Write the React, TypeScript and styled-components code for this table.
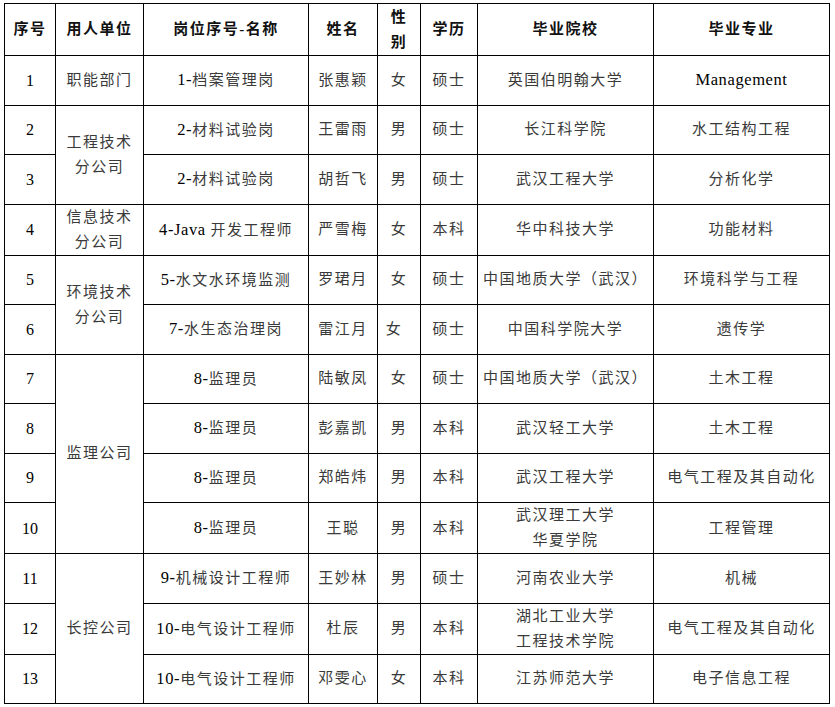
import React from 'react';
import styled, { createGlobalStyle } from 'styled-components';

type Person = {
  no: number;
  unit?: { name: string[]; span: number };
  post: string;
  name: string;
  gender: string;
  degree: string;
  school: string[];
  major: string;
  genderShift?: number;
};

const people: Person[] = [
  { no: 1, unit: { name: ['职能部门'], span: 1 }, post: '1-档案管理岗', name: '张惠颖', gender: '女', degree: '硕士', school: ['英国伯明翰大学'], major: 'Management' },
  { no: 2, unit: { name: ['工程技术', '分公司'], span: 2 }, post: '2-材料试验岗', name: '王雷雨', gender: '男', degree: '硕士', school: ['长江科学院'], major: '水工结构工程' },
  { no: 3, post: '2-材料试验岗', name: '胡哲飞', gender: '男', degree: '硕士', school: ['武汉工程大学'], major: '分析化学' },
  { no: 4, unit: { name: ['信息技术', '分公司'], span: 1 }, post: '4-Java 开发工程师', name: '严雪梅', gender: '女', degree: '本科', school: ['华中科技大学'], major: '功能材料' },
  { no: 5, unit: { name: ['环境技术', '分公司'], span: 2 }, post: '5-水文水环境监测', name: '罗珺月', gender: '女', degree: '硕士', school: ['中国地质大学（武汉）'], major: '环境科学与工程' },
  { no: 6, post: '7-水生态治理岗', name: '雷江月', gender: '女', degree: '硕士', school: ['中国科学院大学'], major: '遗传学', genderShift: 10 },
  { no: 7, unit: { name: ['监理公司'], span: 4 }, post: '8-监理员', name: '陆敏凤', gender: '女', degree: '硕士', school: ['中国地质大学（武汉）'], major: '土木工程' },
  { no: 8, post: '8-监理员', name: '彭嘉凯', gender: '男', degree: '本科', school: ['武汉轻工大学'], major: '土木工程' },
  { no: 9, post: '8-监理员', name: '郑皓炜', gender: '男', degree: '本科', school: ['武汉工程大学'], major: '电气工程及其自动化' },
  { no: 10, post: '8-监理员', name: '王聪', gender: '男', degree: '本科', school: ['武汉理工大学', '华夏学院'], major: '工程管理' },
  { no: 11, unit: { name: ['长控公司'], span: 3 }, post: '9-机械设计工程师', name: '王妙林', gender: '男', degree: '硕士', school: ['河南农业大学'], major: '机械' },
  { no: 12, post: '10-电气设计工程师', name: '杜辰', gender: '男', degree: '本科', school: ['湖北工业大学', '工程技术学院'], major: '电气工程及其自动化' },
  { no: 13, post: '10-电气设计工程师', name: '邓雯心', gender: '女', degree: '本科', school: ['江苏师范大学'], major: '电子信息工程' },
];

const columns = [51, 88, 165, 69, 43, 57, 176, 176];

const GlobalStyle = createGlobalStyle`
  body {
    margin: 0;
    background: #fff;
  }
`;

const Page = styled.div`
  padding: 3px 0 0 4px;
`;

const Table = styled.table`
  border-collapse: collapse;
  table-layout: fixed;
  width: 825px;
  font-family: 'Liberation Serif', 'Noto Sans CJK SC', serif;
  font-size: 15px;
  letter-spacing: 1.5px;
  color: #3a3a3a;
`;

const HeadCell = styled.th`
  border: 1px solid #000;
  height: 51px;
  padding: 0;
  font-weight: 700;
  color: #111;
  line-height: 25px;
  text-align: center;
  vertical-align: middle;
`;

const Cell = styled.td<{ $shift?: number }>`
  border: 1px solid #000;
  height: 48.5px;
  padding: 0 ${(p) => p.$shift ?? 0}px 0 0;
  line-height: 25px;
  text-align: center;
  vertical-align: middle;
  white-space: nowrap;
`;

const NumCell = styled(Cell)`
  color: #000;
  letter-spacing: 0;
  font-size: 16px;
`;

// Latin runs (digits, "Java", "Management") are set tighter, in Times widths
const Latin = styled.span`
  color: #000;
  font-size: 16.5px;
  letter-spacing: 0.6px;
`;

const Mixed = ({ text }: { text: string }) => (
  <>
    {text.split(/([\x20-\x7e]+)/).map((part, i) =>
      /^[\x20-\x7e]+$/.test(part) ? <Latin key={i}>{part}</Latin> : part ? <React.Fragment key={i}>{part}</React.Fragment> : null,
    )}
  </>
);

const Lines = ({ items }: { items: string[] }) => (
  <>
    {items.map((line, i) => (
      <React.Fragment key={i}>
        {i > 0 && <br />}
        {line}
      </React.Fragment>
    ))}
  </>
);

export default function App() {
  return (
    <Page>
      <GlobalStyle />
      <Table>
        <colgroup>
          {columns.map((w, i) => (
            <col key={i} style={{ width: w }} />
          ))}
        </colgroup>
        <thead>
          <tr>
            <HeadCell>序号</HeadCell>
            <HeadCell>用人单位</HeadCell>
            <HeadCell>岗位序号-名称</HeadCell>
            <HeadCell>姓名</HeadCell>
            <HeadCell>
              性<br />别
            </HeadCell>
            <HeadCell>学历</HeadCell>
            <HeadCell>毕业院校</HeadCell>
            <HeadCell>毕业专业</HeadCell>
          </tr>
        </thead>
        <tbody>
          {people.map((p) => (
            <tr key={p.no}>
              <NumCell>{p.no}</NumCell>
              {p.unit && (
                <Cell rowSpan={p.unit.span}>
                  <Lines items={p.unit.name} />
                </Cell>
              )}
              <Cell>
                <Mixed text={p.post} />
              </Cell>
              <Cell>{p.name}</Cell>
              <Cell $shift={p.genderShift}>{p.gender}</Cell>
              <Cell>{p.degree}</Cell>
              <Cell>
                <Lines items={p.school} />
              </Cell>
              <Cell>
                <Mixed text={p.major} />
              </Cell>
            </tr>
          ))}
        </tbody>
      </Table>
    </Page>
  );
}
